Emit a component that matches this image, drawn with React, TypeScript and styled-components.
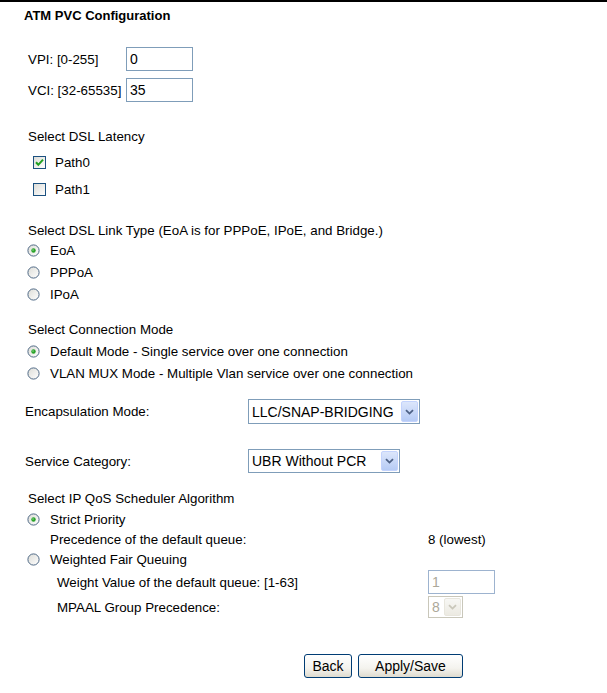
import React from 'react';
import styled, { createGlobalStyle } from 'styled-components';

const Global = createGlobalStyle`
  html, body { margin: 0; padding: 0; background: #fff; }
  body {
    font-family: "Liberation Sans", Arial, sans-serif;
    font-size: 13.33px;
    color: #000;
  }
`;

const Page = styled.div`
  width: 607px;
  box-sizing: border-box;
  border-top: 2px solid #000;
  display: flex;
  flex-direction: column;
`;

const Title = styled.div`
  margin-top: 7px;
  padding-left: 24px;
  font-weight: bold;
  font-size: 13px;
  line-height: 14px;
`;

const Heading = styled.div<{ $top: number; $left?: number }>`
  margin-top: ${p => p.$top}px;
  padding-left: ${p => p.$left ?? 28}px;
  line-height: 14px;
`;

const FieldRow = styled.div<{ $top: number }>`
  margin-top: ${p => p.$top}px;
  padding-left: 28px;
  height: 24px;
  display: grid;
  grid-template-columns: 98px auto;
  align-items: center;
`;

const TextInput = styled.div<{ $disabled?: boolean }>`
  width: 67px;
  height: 24px;
  box-sizing: border-box;
  border: 1px solid ${p => (p.$disabled ? '#9db3cf' : '#7f9db9')};
  font-size: 14px;
  line-height: 22px;
  padding-left: 3px;
  color: ${p => (p.$disabled ? '#aca899' : '#000')};
  background: #fff;
`;

const CheckList = styled.div`
  margin-top: 5px;
  display: flex;
  flex-direction: column;
`;

const CheckRow = styled.div`
  height: 27px;
  padding-left: 33px;
  display: flex;
  align-items: center;
  gap: 9px;
`;

const RadioList = styled.div<{ $top: number }>`
  margin-top: ${p => p.$top}px;
  display: flex;
  flex-direction: column;
`;

const RadioRow = styled.div<{ $h?: number }>`
  height: ${p => p.$h ?? 22}px;
  padding-left: 27px;
  display: flex;
  align-items: center;
  gap: 10px;
`;

const SelectRow = styled.div<{ $top: number; $h: number }>`
  margin-top: ${p => p.$top}px;
  height: ${p => p.$h}px;
  padding-left: 25px;
  display: grid;
  grid-template-columns: 223px auto;
  align-items: center;
`;

const SubRow = styled.div<{ $h: number; $top?: number; $left: number; $col: number }>`
  margin-top: ${p => p.$top ?? 0}px;
  height: ${p => p.$h}px;
  padding-left: ${p => p.$left}px;
  display: grid;
  grid-template-columns: ${p => p.$col}px auto;
  align-items: center;
`;

const SelectBox = styled.div<{ $w: number; $h: number; $disabled?: boolean }>`
  width: ${p => p.$w}px;
  height: ${p => p.$h}px;
  box-sizing: border-box;
  border: 1px solid ${p => (p.$disabled ? '#c9c7ba' : '#7f9db9')};
  background: #fff;
  display: flex;
  align-items: stretch;
  font-size: 14px;
  color: ${p => (p.$disabled ? '#aca899' : '#000')};
`;

const SelectText = styled.div`
  flex: 1;
  display: flex;
  align-items: center;
  padding-left: 3px;
  white-space: nowrap;
`;

const DropButton = styled.div<{ $disabled?: boolean }>`
  width: 17px;
  margin: 1px;
  box-sizing: border-box;
  border: 1px solid ${p => (p.$disabled ? '#e8e6dd' : '#c3d3fd')};
  border-radius: 2px;
  background: ${p =>
    p.$disabled
      ? 'linear-gradient(#f7f7f4, #eceae2)'
      : 'linear-gradient(#dce6fb, #b6cbf5)'};
  display: flex;
  align-items: center;
  justify-content: center;
`;

const ButtonBar = styled.div`
  margin-top: 36px;
  padding-left: 304px;
  display: flex;
  gap: 6px;
`;

const Button = styled.div<{ $w: number }>`
  width: ${p => p.$w}px;
  height: 24px;
  box-sizing: border-box;
  border: 1px solid #003c74;
  border-radius: 3px;
  background: linear-gradient(#ffffff 0%, #f4f3ee 60%, #dedbcf 100%);
  font-size: 14px;
  display: flex;
  align-items: center;
  justify-content: center;
`;

const Chevron: React.FC<{ disabled?: boolean }> = ({ disabled }) => (
  <svg width="9" height="6" viewBox="0 0 9 6">
    <path
      d="M1 1.2 L4.5 4.6 L8 1.2"
      fill="none"
      stroke={disabled ? '#c9c7ba' : '#4d6185'}
      strokeWidth="1.8"
    />
  </svg>
);

const Select: React.FC<{ w: number; h: number; value: string; disabled?: boolean }> = ({
  w,
  h,
  value,
  disabled,
}) => (
  <SelectBox $w={w} $h={h} $disabled={disabled}>
    <SelectText>{value}</SelectText>
    <DropButton $disabled={disabled}>
      <Chevron disabled={disabled} />
    </DropButton>
  </SelectBox>
);

const Checkbox: React.FC<{ checked?: boolean }> = ({ checked }) => (
  <svg width="13" height="13" viewBox="0 0 13 13">
    <defs>
      <linearGradient id="cbg" x1="0" y1="0" x2="1" y2="1">
        <stop offset="0" stopColor="#dcdcd7" />
        <stop offset="1" stopColor="#ffffff" />
      </linearGradient>
    </defs>
    <rect x="0.5" y="0.5" width="12" height="12" fill="url(#cbg)" stroke="#1c5180" />
    {checked && (
      <path d="M3 6.3 L5.3 8.8 L10 3.6" fill="none" stroke="#21a121" strokeWidth="2" />
    )}
  </svg>
);

const Radio: React.FC<{ checked?: boolean }> = ({ checked }) => (
  <svg width="13" height="13" viewBox="0 0 13 13">
    <defs>
      <linearGradient id="rbg" x1="0" y1="0" x2="1" y2="1">
        <stop offset="0" stopColor="#dcdcd7" />
        <stop offset="1" stopColor="#ffffff" />
      </linearGradient>
    </defs>
    <circle cx="6.5" cy="6.5" r="5.6" fill="url(#rbg)" stroke="#4f6985" strokeWidth="1" />
    {checked && (
      <>
        <circle cx="6.5" cy="6.5" r="2.2" fill="#2aa32a" />
        <circle cx="6" cy="6" r="0.8" fill="#8fd88f" />
      </>
    )}
  </svg>
);

export default function App() {
  return (
    <>
      <Global />
      <Page>
        <Title>ATM PVC Configuration</Title>

        <FieldRow $top={24}>
          <span>VPI: [0-255]</span>
          <TextInput>0</TextInput>
        </FieldRow>
        <FieldRow $top={7}>
          <span>VCI: [32-65535]</span>
          <TextInput>35</TextInput>
        </FieldRow>

        <Heading $top={28}>Select DSL Latency</Heading>
        <CheckList>
          <CheckRow>
            <Checkbox checked />
            <span>Path0</span>
          </CheckRow>
          <CheckRow>
            <Checkbox />
            <span>Path1</span>
          </CheckRow>
        </CheckList>

        <Heading $top={21}>Select DSL Link Type (EoA is for PPPoE, IPoE, and Bridge.)</Heading>
        <RadioList $top={1}>
          <RadioRow>
            <Radio checked />
            <span>EoA</span>
          </RadioRow>
          <RadioRow>
            <Radio />
            <span>PPPoA</span>
          </RadioRow>
          <RadioRow>
            <Radio />
            <span>IPoA</span>
          </RadioRow>
        </RadioList>

        <Heading $top={18}>Select Connection Mode</Heading>
        <RadioList $top={3}>
          <RadioRow>
            <Radio checked />
            <span>Default Mode - Single service over one connection</span>
          </RadioRow>
          <RadioRow>
            <Radio />
            <span>VLAN MUX Mode - Multiple Vlan service over one connection</span>
          </RadioRow>
        </RadioList>

        <SelectRow $top={15} $h={25}>
          <span>Encapsulation Mode:</span>
          <Select w={172} h={25} value="LLC/SNAP-BRIDGING" />
        </SelectRow>
        <SelectRow $top={25} $h={24}>
          <span>Service Category:</span>
          <Select w={152} h={24} value="UBR Without PCR" />
        </SelectRow>

        <Heading $top={19}>Select IP QoS Scheduler Algorithm</Heading>
        <RadioList $top={2}>
          <RadioRow>
            <Radio checked />
            <span>Strict Priority</span>
          </RadioRow>
          <SubRow $h={19} $left={50} $col={378}>
            <span>Precedence of the default queue:</span>
            <span>8 (lowest)</span>
          </SubRow>
          <RadioRow $h={21}>
            <Radio />
            <span>Weighted Fair Queuing</span>
          </RadioRow>
          <SubRow $h={24} $left={57} $col={371}>
            <span>Weight Value of the default queue: [1-63]</span>
            <TextInput $disabled>1</TextInput>
          </SubRow>
          <SubRow $h={22} $top={2} $left={57} $col={371}>
            <span>MPAAL Group Precedence:</span>
            <Select w={35} h={22} value="8" disabled />
          </SubRow>
        </RadioList>

        <ButtonBar>
          <Button $w={48}>Back</Button>
          <Button $w={105}>Apply/Save</Button>
        </ButtonBar>
      </Page>
    </>
  );
}
